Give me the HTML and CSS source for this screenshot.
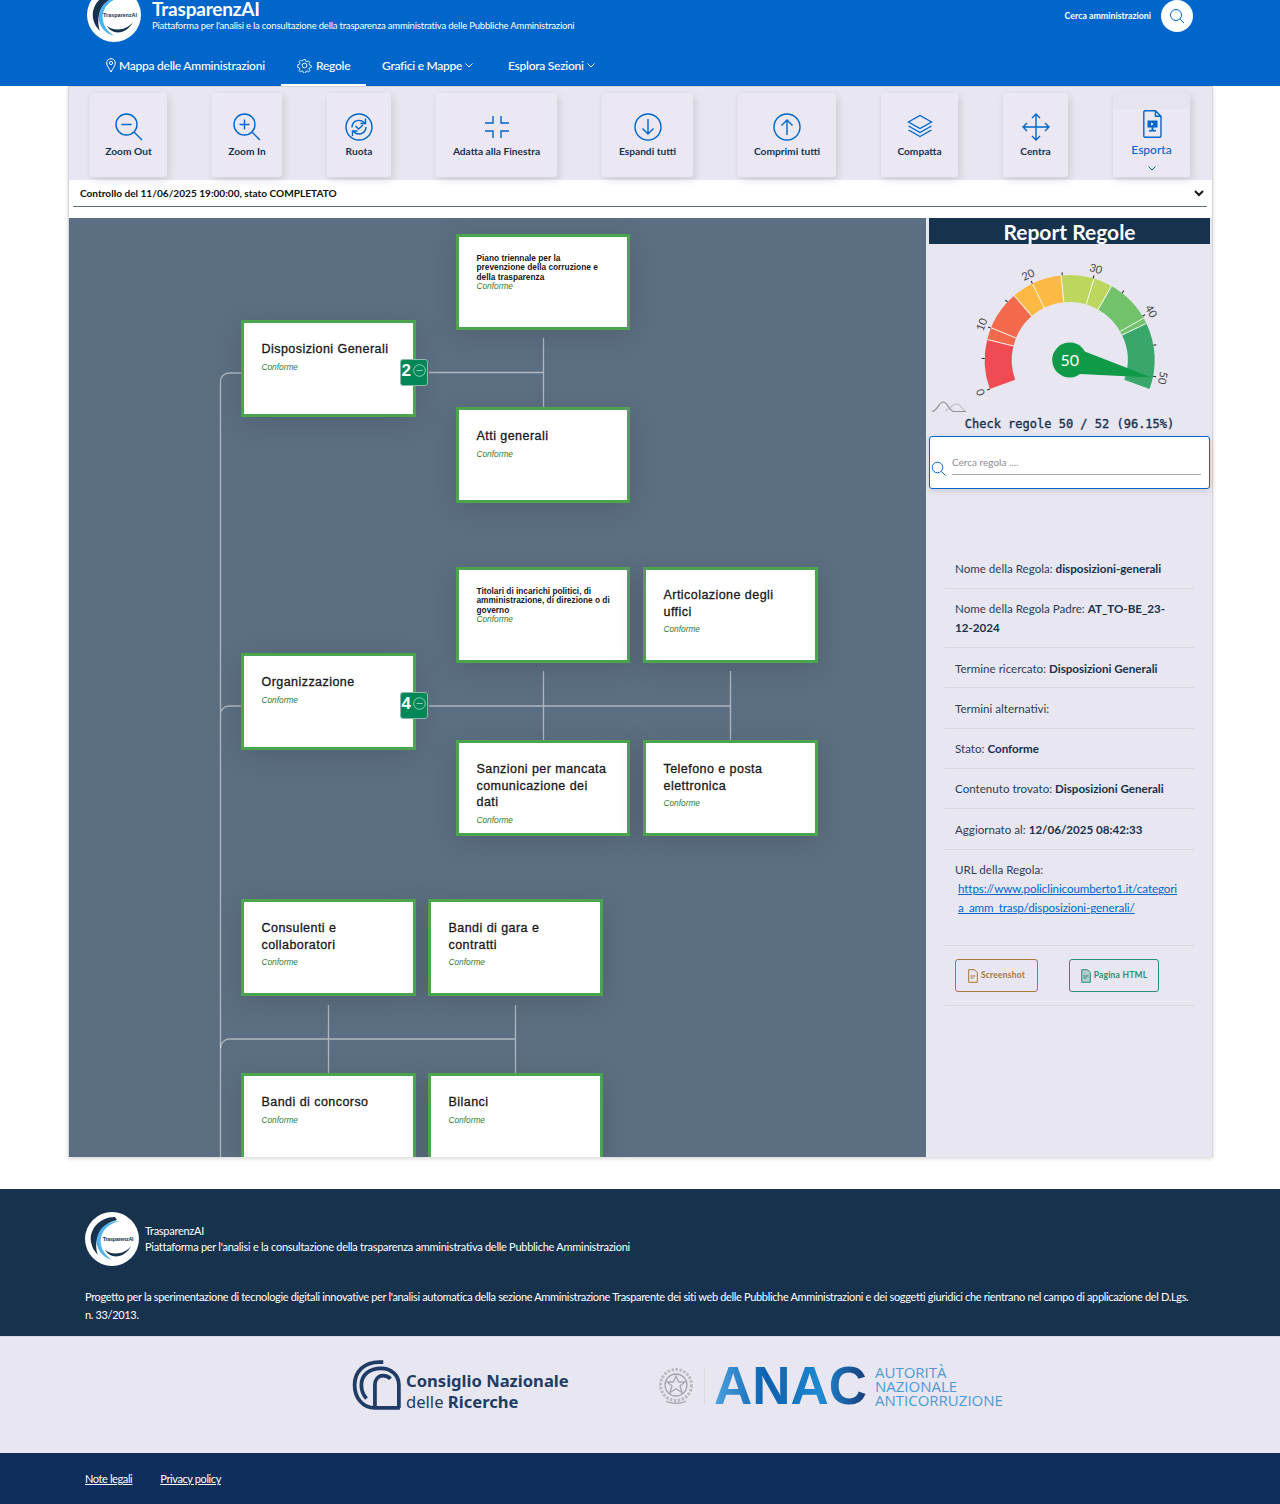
FILE: index.html
```html
<!DOCTYPE html>
<html lang="it">
<head>
    <meta charset="UTF-8">
    <title>TrasparenzAI - Regole</title>
    <link rel="stylesheet" href="styles.css">
</head>
<body>
    <svg class="defs">
        <symbol id="logo" viewBox="0 0 54 54">
            <circle cx="27" cy="27" r="27" fill="#fff"/>
            <path d="M30 5C14 5 4 18 6 30c1 6 4 10 7 13C8 30 14 12 32 8z" fill="#17324d"/>
            <path d="M36 9C20 8 10 20 12 33c2 8 8 13 15 15-9-6-14-16-10-26 3-7 11-12 19-13z" fill="#4db2ee"/>
            <path d="M20 38c8 6 20 4 26-4-6 12-20 14-26 4z" fill="#17324d"/>
            <text x="33" y="29" class="logo-text">TrasparenzAI</text>
        </symbol>
    </svg>

    <header class="site-header">
        <div class="header-top">
            <svg class="header-logo"><use href="#logo"/></svg>
            <div class="brand">
                <div class="brand-name">TrasparenzAI</div>
                <div class="brand-sub">Piattaforma per l'analisi e la consultazione della trasparenza amministrativa delle Pubbliche Amministrazioni</div>
            </div>
            <div class="header-search">
                <span class="search-label">Cerca amministrazioni</span>
                <span class="search-circle">
                    <svg width="16" height="16" viewBox="0 0 16 16" class="stroke-blue thin"><circle cx="7" cy="7" r="5.5"/><path d="M11 11l4 4"/></svg>
                </span>
            </div>
        </div>
        <nav class="main-nav">
            <a class="nav-item">
                <svg width="10" height="15" viewBox="0 0 10 15" class="stroke-white"><path d="M5 14C3 10 .7 8 .7 5a4.3 4.3 0 0 1 8.6 0C9.300 8 7 10 5 14z"/><circle cx="5" cy="5" r="1.600"/></svg>
                Mappa delle Amministrazioni
            </a>
            <a class="nav-item active">
                <svg width="15" height="15" viewBox="0 0 16 16" class="stroke-white"><circle cx="8" cy="8" r="2.500"/><path d="M6.800 1h2.400l.4 2 1.500.7 1.800-1.100 1.600 1.700-1.100 1.700.6 1.600 2 .4v2.200l-2 .5-.6 1.500 1.100 1.800-1.600 1.600-1.800-1.100-1.500.6-.4 2H6.800l-.4-2-1.500-.6-1.800 1.100-1.600-1.600 1.100-1.800-.6-1.500-2-.5V7l2-.4.600-1.600-1.100-1.700 1.600-1.700 1.800 1.100 1.500-.7z" transform="translate(.8 .8) scale(.9)"/></svg>
                Regole
            </a>
            <a class="nav-item">
                Grafici e Mappe
                <svg width="8" height="5" viewBox="0 0 8 5" class="stroke-white"><path d="M.5.500L4 4 7.500.500"/></svg>
            </a>
            <a class="nav-item">
                Esplora Sezioni
                <svg width="8" height="5" viewBox="0 0 8 5" class="stroke-white"><path d="M.5.500L4 4 7.500.500"/></svg>
            </a>
        </nav>
    </header>

    <main class="card">
        <div class="toolbar">
            <button class="tool-btn">
                <svg viewBox="0 0 28 28" class="stroke-blue"><circle cx="11.500" cy="11.500" r="10.500"/><path d="M19 19l8 8M6.500 11.500h10"/></svg>
                Zoom Out
            </button>
            <button class="tool-btn">
                <svg viewBox="0 0 28 28" class="stroke-blue"><circle cx="11.500" cy="11.500" r="10.500"/><path d="M19 19l8 8M6.500 11.500h10M11.500 6.500v10"/></svg>
                Zoom In
            </button>
            <button class="tool-btn">
                <svg viewBox="0 0 28 28" class="stroke-blue"><circle cx="14" cy="14" r="13"/><path d="M7 14.500C7 9 12 6 17 8l3 2M20.500 5.500v5h-5M21 14c0 5.500-5 8-10 6.500L8 18M7.500 23v-5h5M10.500 13l3 3 4.500-4"/></svg>
                Ruota
            </button>
            <button class="tool-btn">
                <svg viewBox="0 0 28 28" class="stroke-blue"><path d="M2 10h8V3M26 10h-8V3M2 18h8v7M26 18h-8v7"/></svg>
                Adatta alla Finestra
            </button>
            <button class="tool-btn">
                <svg viewBox="0 0 28 28" class="stroke-blue"><circle cx="14" cy="14" r="13"/><path d="M14 6v15M8.500 15.500L14 21l5.500-5.500"/></svg>
                Espandi tutti
            </button>
            <button class="tool-btn">
                <svg viewBox="0 0 28 28" class="stroke-blue"><circle cx="14" cy="14" r="13"/><path d="M14 22V7M8.500 12.500L14 7l5.500 5.500"/></svg>
                Comprimi tutti
            </button>
            <button class="tool-btn">
                <svg viewBox="0 0 28 28" class="stroke-blue"><path d="M14 2.500L25.500 9 14 15.500 2.500 9zM2.500 13L14 19.500 25.500 13M2.500 17L14 23.500 25.500 17"/></svg>
                Compatta
            </button>
            <button class="tool-btn">
                <svg viewBox="0 0 28 28" class="stroke-blue"><path d="M14 1v26M1 14h26M10 5l4-4 4 4M10 23l4 4 4-4M5 10l-4 4 4 4M23 10l4 4-4 4"/></svg>
                Centra
            </button>
            <button class="tool-btn export-btn">
                <svg viewBox="0 0 28 28" class="stroke-blue"><path d="M7 .8h10.500L23 6.300V26a1.200 1.200 0 0 1-1.200 1.200H7A1.200 1.200 0 0 1 5.800 26V2A1.200 1.200 0 0 1 7 .8zM17.500.8v5.500H23"/><path class="fill-blue" d="M9.500 10.500h10v7h-4v2.500h2.500v1.500h-7V20h2.500v-2.500h-4z"/><path d="M13 12.500l3 1.500-3 1.500z" class="fill-light"/></svg>
                Esporta
                <svg class="export-chevron stroke-blue thin" viewBox="0 0 8 5"><path d="M.5.500L4 4 7.500.500"/></svg>
            </button>
        </div>

        <div class="run-select">
            <span>Controllo del 11/06/2025 19:00:00, stato COMPLETATO</span>
            <svg width="10" height="7" viewBox="0 0 10 7"><path d="M1 1l4 4 4-4" fill="none" stroke="#17171a" stroke-width="2"/></svg>
        </div>

        <div class="workspace">
            <section class="chart">
                <svg class="links" width="857" height="939">
                    <path d="M172 155H160a8.500 8.500 0 0 0-8.500 8.500V939M172 488H160a8.500 8.500 0 0 0-8.500 8.500M360 154.500H474.500M474.500 120V189"/>
                    <path d="M360 488H661.500M474.500 453V522M661.500 453V522"/>
                    <path d="M151.500 830a9 9 0 0 1 9-9H446.500M259.500 787V855M446.500 787V855"/>
                </svg>

                <div class="node pos-piano"><div class="node-title small">Piano triennale per la prevenzione della corruzione e della trasparenza</div><div class="node-state tight">Conforme</div></div>
                <div class="node pos-disp"><div class="node-title">Disposizioni Generali</div><div class="node-state">Conforme</div>
                    <div class="node-badge">2<svg width="13" height="13" viewBox="0 0 13 13"><circle cx="6.500" cy="6.500" r="5.800"/><path d="M3.500 6.500h6"/></svg></div>
                </div>
                <div class="node pos-atti"><div class="node-title">Atti generali</div><div class="node-state">Conforme</div></div>
                <div class="node pos-titolari"><div class="node-title small">Titolari di incarichi politici, di amministrazione, di direzione o di governo</div><div class="node-state tight">Conforme</div></div>
                <div class="node pos-artic"><div class="node-title">Articolazione degli uffici</div><div class="node-state">Conforme</div></div>
                <div class="node pos-org"><div class="node-title">Organizzazione</div><div class="node-state">Conforme</div>
                    <div class="node-badge">4<svg width="13" height="13" viewBox="0 0 13 13"><circle cx="6.500" cy="6.500" r="5.800"/><path d="M3.500 6.500h6"/></svg></div>
                </div>
                <div class="node pos-sanz"><div class="node-title">Sanzioni per mancata comunicazione dei dati</div><div class="node-state">Conforme</div></div>
                <div class="node pos-tel"><div class="node-title">Telefono e posta elettronica</div><div class="node-state">Conforme</div></div>
                <div class="node pos-cons"><div class="node-title">Consulenti e collaboratori</div><div class="node-state">Conforme</div></div>
                <div class="node pos-gara"><div class="node-title">Bandi di gara e contratti</div><div class="node-state">Conforme</div></div>
                <div class="node pos-conc"><div class="node-title">Bandi di concorso</div><div class="node-state">Conforme</div></div>
                <div class="node pos-bil"><div class="node-title">Bilanci</div><div class="node-state">Conforme</div></div>
            </section>

            <aside class="report">
                <h2 class="report-title">Report Regole</h2>
                <svg class="gauge" width="281" height="170" viewBox="0 0 281 170">
                    <g transform="translate(140.7 116)">
                        <g class="gauge-arc">
                            <circle r="71.500" pathLength="360" stroke-dasharray="34 326" stroke="#ee4c52" transform="rotate(-200)"/>
                            <circle r="71.500" pathLength="360" stroke-dasharray="35.200 324.800" stroke="#f26a4b" transform="rotate(-166)"/>
                            <circle r="71.500" pathLength="360" stroke-dasharray="35 325" stroke="#fdb946" transform="rotate(-130.800)"/>
                            <circle r="71.500" pathLength="360" stroke-dasharray="35.200 324.800" stroke="#bdd75e" transform="rotate(-95.800)"/>
                            <circle r="71.500" pathLength="360" stroke-dasharray="35.100 324.900" stroke="#72c26c" transform="rotate(-60.600)"/>
                            <circle r="71.500" pathLength="360" stroke-dasharray="45.500 314.500" stroke="#3aa76a" transform="rotate(-25.500)"/>
                        </g>
                        <g class="gauge-seps">
                            <path d="M0-58V-85" transform="rotate(-76)"/>
                            <path d="M0-58V-85" transform="rotate(-67.700)"/>
                            <path d="M0-58V-85" transform="rotate(-40.800)"/>
                            <path d="M0-58V-85" transform="rotate(-26)"/>
                            <path d="M0-58V-85" transform="rotate(-5.800)"/>
                            <path d="M0-58V-85" transform="rotate(16.600)"/>
                            <path d="M0-58V-85" transform="rotate(29.400)"/>
                            <path d="M0-58V-85" transform="rotate(60.500)"/>
                            <path d="M0-58V-85" transform="rotate(64.500)"/>
                        </g>
                        <g class="gauge-ticks">
                            <path d="M0-85V-88" transform="rotate(-110)"/>
                            <path d="M0-85V-88" transform="rotate(-89)"/>
                            <path d="M0-85V-88" transform="rotate(-68)"/>
                            <path d="M0-85V-88" transform="rotate(-47)"/>
                            <path d="M0-85V-88" transform="rotate(-26)"/>
                            <path d="M0-85V-88" transform="rotate(-5)"/>
                            <path d="M0-85V-88" transform="rotate(16)"/>
                            <path d="M0-85V-88" transform="rotate(38)"/>
                            <path d="M0-85V-88" transform="rotate(59)"/>
                            <path d="M0-85V-88" transform="rotate(80)"/>
                            <path d="M0-85V-88" transform="rotate(101)"/>
                        </g>
                        <g class="gauge-labels">
                            <text transform="rotate(-110) translate(0 -91)">0</text>
                            <text transform="rotate(-68) translate(0 -91)">10</text>
                            <text transform="rotate(-26) translate(0 -91)">20</text>
                            <text transform="rotate(16) translate(0 -91)">30</text>
                            <text transform="rotate(59) translate(0 -91)">40</text>
                            <text transform="rotate(101) translate(0 -91)">50</text>
                        </g>
                        <path class="gauge-needle" d="M15-8.500L82 17.500 10 14z"/>
                        <circle r="17.500" class="gauge-hub"/>
                        <text class="gauge-value" y="5.500">50</text>
                    </g>
                    <path class="spark light" d="M16 167c5-1 6-7 12-7 4 0 5 6 8 7"/>
                    <path class="spark" d="M3 167.500c5 0 7-9.500 11-9.500 5 0 6 9.500 11 9.500h12"/>
                </svg>
                <div class="check-line">Check regole 50 / 52 (96.15%)</div>
                <div class="rule-search">
                    <svg width="15" height="15" viewBox="0 0 15 15" class="stroke-blue thin"><circle cx="6.500" cy="6.500" r="5.300"/><path d="M10.500 10.500l4 4"/></svg>
                    <div class="rule-input">Cerca regola ....</div>
                </div>

                <ul class="rule-details">
                    <li>Nome della Regola: <strong>disposizioni-generali</strong></li>
                    <li>Nome della Regola Padre: <strong>AT_TO-BE_23-<br>12-2024</strong></li>
                    <li>Termine ricercato: <strong>Disposizioni Generali</strong></li>
                    <li>Termini alternativi:</li>
                    <li>Stato: <strong>Conforme</strong></li>
                    <li>Contenuto trovato: <strong>Disposizioni Generali</strong></li>
                    <li>Aggiornato al: <strong>12/06/2025 08:42:33</strong></li>
                    <li class="url-item">URL della Regola:<br><a class="rule-link">https://www.policlinicoumberto1.it/categoria_amm_trasp/disposizioni-generali/</a></li>
                    <li class="button-row">
                        <a class="outline-btn brown">
                            <svg width="10" height="14" viewBox="0 0 10 14"><path d="M.7.700h5.800l2.800 2.800v9.800H.7zM2.500 7h5M2.500 9h3"/></svg>
                            Screenshot
                        </a>
                        <a class="outline-btn teal">
                            <svg width="10" height="14" viewBox="0 0 10 14"><path d="M.7.700h5.800l2.800 2.800v9.800H.7zM2.500 7h5M2.500 9h3"/></svg>
                            Pagina HTML
                        </a>
                    </li>
                </ul>
            </aside>
        </div>
    </main>

    <footer class="site-footer">
        <div class="footer-top">
            <div class="footer-brand">
                <svg class="footer-logo"><use href="#logo"/></svg>
                <div>
                    <div>TrasparenzAI</div>
                    <div>Piattaforma per l'analisi e la consultazione della trasparenza amministrativa delle Pubbliche Amministrazioni</div>
                </div>
            </div>
            <p class="footer-note">Progetto per la sperimentazione di tecnologie digitali innovative per l'analisi automatica della sezione Amministrazione Trasparente dei siti web delle Pubbliche Amministrazioni e dei soggetti giuridici che rientrano nel campo di applicazione del D.Lgs. n. 33/2013.</p>
        </div>
        <div class="partners">
            <div class="cnr">
                <svg width="50" height="50" viewBox="0 0 48 48" class="cnr-mark"><path d="M46 46H22C10 46 2.500 36 2.500 24 2.500 11 12 2 26 2h4"/><path d="M14 37c-3-3-5-8-5-13C9 14 17 8 28 8c10 0 17 7 17 16v22"/><path d="M22 46V24c0-5 3-9 8-9 3 0 5 1 7 3"/></svg>
                <div class="cnr-text"><b>Consiglio Nazionale</b><span>delle <b>Ricerche</b></span></div>
            </div>
            <div class="anac">
                <svg width="36" height="40" viewBox="0 0 36 40" class="emblem"><circle cx="18" cy="19" r="15.500" class="wreath"/><circle cx="18" cy="19" r="11"/><path d="M18 10l2.700 6h6.300l-5 4 2 6.500-6-3.800-6 3.800 2-6.500-5-4h6.300z"/><path d="M8 35c4 3 16 3 20 0"/></svg>
                <div class="anac-divider"></div>
                <svg width="152" height="42" viewBox="0 0 152 42" class="anac-mark">
                    <defs><linearGradient id="anacFill" x1="0" x2="1" y1="0" y2="0"><stop offset="0" stop-color="#4aa3e0"/><stop offset=".35" stop-color="#0b5fad"/><stop offset=".7" stop-color="#1f8ad2"/><stop offset="1" stop-color="#173a78"/></linearGradient></defs>
                    <text x="-2" y="39" textLength="153" lengthAdjust="spacingAndGlyphs" fill="url(#anacFill)">ANAC</text>
                </svg>
                <div class="anac-text">AUTORITÀ<br>NAZIONALE<br>ANTICORRUZIONE</div>
            </div>
        </div>
        <div class="footer-links">
            <a>Note legali</a>
            <a>Privacy policy</a>
        </div>
    </footer>
</body>
</html>
```

FILE: styles.css
```css
* {
    margin: 0;
    padding: 0;
    box-sizing: border-box;
}

body {
    font-family: 'Lato', 'Roboto', sans-serif;
    background: white;
    color: #17324d;
    width: 1280px;
    height: 1504px;
    overflow: hidden;
}

.defs {
    position: absolute;
    width: 0;
    height: 0;
}

.logo-text {
    font-family: 'Liberation Sans', sans-serif;
    font-size: 5.4px;
    font-weight: bold;
    fill: #17324d;
    text-anchor: middle;
}

.stroke-blue { fill: none; stroke: #0066cc; stroke-width: 1.4; }
.stroke-blue.thin { stroke-width: 1; }
.stroke-white { fill: none; stroke: white; stroke-width: 1; flex-shrink: 0; }
.fill-blue { fill: #0066cc; stroke: none; }
.fill-light { fill: #e8e6f0; stroke: none; }

/* header */
.site-header {
    background: #0066cc;
    height: 86px;
    color: white;
    overflow: hidden;
}

.header-top {
    display: flex;
    align-items: flex-start;
    margin-top: -12px;
    padding: 0 87px;
    height: 54px;
}

.header-logo {
    width: 54px;
    height: 54px;
    flex-shrink: 0;
}

.brand {
    margin-left: 11px;
    padding-top: 12px;
}

.brand-name {
    font-size: 19px;
    font-weight: 700;
    line-height: 18px;
    letter-spacing: -0.2px;
}

.brand-sub {
    font-size: 9.5px;
    line-height: 13px;
    margin-top: 1px;
    letter-spacing: -0.2px;
}

.header-search {
    margin-left: auto;
    display: flex;
    align-items: center;
    gap: 10px;
    margin-top: 12px;
    font-size: 8.8px;
    font-weight: 700;
}

.search-label {
    padding-bottom: 1px;
}

.search-circle {
    width: 32px;
    height: 32px;
    border-radius: 50%;
    background: white;
    display: flex;
    align-items: center;
    justify-content: center;
}

.main-nav {
    display: grid;
    grid-template-columns: 191px 85px 126px auto;
    margin-left: 90px;
    height: 44px;
}

.nav-item {
    display: flex;
    align-items: center;
    gap: 3px;
    padding: 2px 16px 0;
    font-size: 12px;
    font-weight: 500;
    letter-spacing: -0.25px;
    white-space: nowrap;
}

.nav-item.active {
    border-bottom: 2px solid white;
    padding-top: 4px;
    gap: 4px;
}

/* main card */
.card {
    margin: 0 67px 0 68px;
    height: 1071px;
    background: white;
    border: 1px solid #d4d4da;
    border-top: 0;
    box-shadow: 0 2px 4px rgba(0,0,0,0.15);
}

.toolbar {
    background: #e8e6f0;
    height: 94px;
    padding: 6px 0 0 21px;
    display: grid;
    grid-template-columns: 77px 70px 64px 121px 91px 98px 77px 65px 77px;
    gap: 45px;
    border-top: 1px solid #d4d4da;
}

.tool-btn {
    height: 84px;
    border: none;
    border-radius: 3px;
    background: #ebe8f3;
    box-shadow: 2px 3px 8px rgba(0,0,0,0.12);
    font-family: inherit;
    font-size: 10.2px;
    font-weight: 700;
    color: #17324d;
    display: flex;
    flex-direction: column;
    align-items: center;
    padding-top: 20px;
    gap: 4px;
    white-space: nowrap;
}

.tool-btn svg {
    width: 28px;
    height: 28px;
    flex-shrink: 0;
}

.export-btn {
    color: #0066cc;
    font-size: 12px;
    font-weight: 500;
    padding-top: 17px;
    background: linear-gradient(#e6e4ee 16px, #ebe8f3 16px);
}

.tool-btn .export-chevron {
    width: 8px;
    height: 5px;
    margin-top: 5px;
}

.run-select {
    margin: 0 5px 0 4px;
    height: 27px;
    padding: 0 3px 0 7px;
    display: flex;
    align-items: center;
    justify-content: space-between;
    border-bottom: 1px solid #5c6f82;
    font-size: 10.1px;
    font-weight: 700;
    color: #111;
}

.workspace {
    display: flex;
    margin-top: 11px;
    height: 939px;
}

/* org chart */
.chart {
    position: relative;
    width: 857px;
    background: #5c6f82;
    overflow: hidden;
    flex-shrink: 0;
}

.links {
    position: absolute;
    left: 0;
    top: 0;
    fill: none;
    stroke: rgba(255,255,255,0.5);
    stroke-width: 1.3;
}

.node {
    position: absolute;
    width: 174px;
    height: 96px;
    background: white;
    border: 3px solid #4ba54f;
    padding: 18px 20px 0 17.500px;
    box-shadow: 0 6px 28px rgba(0,0,0,0.14);
    font-family: 'Liberation Sans', sans-serif;
}

.node-title {
    font-size: 12.5px;
    line-height: 16.5px;
    font-weight: 400;
    letter-spacing: 0.45px;
    color: #17171a;
    -webkit-text-stroke: 0.3px #17171a;
}

.node-title.small {
    font-size: 8.3px;
    line-height: 9.4px;
    font-weight: bold;
    letter-spacing: 0;
    -webkit-text-stroke: 0;
}

.pos-piano .node-title.small {
    margin-right: 4px;
}

.pos-titolari .node-title.small {
    margin-right: -10px;
}

.node-state {
    font-size: 8.3px;
    font-style: italic;
    color: #2e7d32;
    margin-top: 4px;
}

.node-state.tight {
    margin-top: 0;
    line-height: 9px;
}

.node-badge {
    position: absolute;
    right: -15px;
    top: 36px;
    width: 28px;
    height: 27px;
    background: #008758;
    border: 1px solid #8fb8ad;
    border-radius: 3px;
    color: white;
    font-size: 17px;
    line-height: 21px;
    font-weight: bold;
    letter-spacing: 0;
    display: flex;
    align-items: flex-start;
    gap: 2px;
    padding-left: 0.5px;
}

.node-badge svg {
    fill: none;
    stroke: rgba(255,255,255,0.7);
    stroke-width: 0.8;
    margin-top: 4px;
    flex-shrink: 0;
}

.pos-piano { left: 387px; top: 16px; padding-top: 17px; }
.pos-disp { left: 172px; top: 102px; height: 97px; width: 175px; }
.pos-atti { left: 387px; top: 189px; }
.pos-titolari { left: 387px; top: 349px; padding-top: 17px; }
.pos-artic { left: 574px; top: 349px; width: 175px; padding-top: 17px; }
.pos-org { left: 172px; top: 435px; height: 97px; width: 175px; }
.pos-sanz { left: 387px; top: 522px; }
.pos-tel { left: 574px; top: 522px; width: 175px; }
.pos-cons { left: 172px; top: 681px; height: 97px; width: 175px; }
.pos-gara { left: 359px; top: 681px; height: 97px; width: 175px; }
.pos-conc { left: 172px; top: 855px; height: 97px; width: 175px; }
.pos-bil { left: 359px; top: 855px; height: 97px; width: 175px; }

/* report panel */
.report {
    flex: 1;
    background: #e8e6f0;
    padding: 0 2px 0 3px;
}

.report-title {
    background: #17324d;
    color: white;
    height: 26px;
    line-height: 27px;
    font-size: 21px;
    font-weight: 700;
    text-align: center;
}

.gauge {
    display: block;
}

.gauge-arc circle {
    fill: none;
    stroke-width: 27;
}

.gauge-seps path {
    stroke: rgba(255,255,255,0.85);
    stroke-width: 1;
}

.gauge-ticks path {
    stroke: #222;
    stroke-width: 1;
}

.gauge-labels text {
    font-family: 'Lato', sans-serif;
    font-size: 11px;
    fill: #444;
    text-anchor: middle;
}

.gauge-needle, .gauge-hub {
    fill: #0e9a47;
}

.gauge-value {
    font-family: 'Lato', sans-serif;
    font-size: 16px;
    fill: white;
    text-anchor: middle;
}

.spark {
    fill: none;
    stroke: #8f8f94;
    stroke-width: 1.2;
}

.spark.light {
    stroke: #bcbcc2;
}

.check-line {
    font-family: 'DejaVu Sans Mono', monospace;
    font-size: 12px;
    font-weight: 500;
    line-height: 20px;
    margin-bottom: 2px;
    text-align: center;
    color: #17324d;
    -webkit-text-stroke: 0.35px #17324d;
}

.rule-search {
    height: 53px;
    background: white;
    border: 1px solid #0066cc;
    border-radius: 3px;
    box-shadow: 0 2px 6px rgba(0,0,0,0.12);
    padding: 0 8px 13px 1px;
    display: flex;
    align-items: flex-end;
    gap: 6px;
}

.rule-search svg {
    margin-bottom: -1px;
    flex-shrink: 0;
}

.rule-input {
    flex: 1;
    height: 24px;
    border-bottom: 1px solid #a9a9ad;
    font-size: 10px;
    line-height: 23px;
    color: #8c8c92;
}

.rule-details {
    list-style: none;
    margin: 59.500px 16px 0 16px;
    font-size: 11.6px;
    line-height: 19px;
    color: #2b3f54;
}

.rule-details li {
    padding: 10.500px 10px 9.800px;
    border-bottom: 1px solid #d8d7de;
}

.rule-details strong {
    font-weight: 700;
    color: #17324d;
}

.url-item {
    min-height: 96.500px;
}

.rule-link {
    display: block;
    width: 225px;
    padding-left: 3px;
    color: #0066cc;
    text-decoration: underline;
    letter-spacing: -0.1px;
    word-break: break-all;
}

.rule-details .button-row {
    display: flex;
    gap: 31px;
    padding: 13px 10px 13px;
}

.outline-btn {
    height: 33px;
    display: flex;
    align-items: center;
    justify-content: center;
    gap: 3px;
    border-radius: 3px;
    font-size: 8.5px;
    font-weight: 700;
    letter-spacing: 0.2px;
    border: 1.5px solid;
}

.outline-btn svg {
    fill: none;
    stroke: currentColor;
    stroke-width: 1;
    flex-shrink: 0;
}

.outline-btn.brown { width: 83px; color: #a8773b; }
.outline-btn.teal { width: 90px; color: #2a8f77; }
.outline-btn.teal svg { fill: rgba(42,143,119,0.3); }

/* footer */
.site-footer {
    margin-top: 32px;
}

.footer-top {
    background: #17324d;
    height: 147px;
    padding: 23px 85px 0;
    color: white;
    font-size: 11px;
    line-height: 16px;
    letter-spacing: -0.27px;
}

.footer-brand {
    display: flex;
    align-items: center;
    gap: 6px;
}

.footer-logo {
    width: 54px;
    height: 54px;
    flex-shrink: 0;
}

.footer-note {
    margin-top: 22px;
    line-height: 18px;
    letter-spacing: -0.34px;
}

.partners {
    background: #e8e6f0;
    height: 117px;
    display: flex;
    align-items: flex-start;
    padding: 21px 0 0 352px;
    border-top: 1px solid #dcdbe3;
}

.cnr {
    display: flex;
    align-items: center;
    gap: 4px;
    width: 306px;
}

.cnr-mark {
    fill: none;
    stroke: #1f3c66;
    stroke-width: 3.6;
    flex-shrink: 0;
}

.cnr-text {
    display: flex;
    flex-direction: column;
    padding-top: 11.500px;
    font-family: 'Noto Sans', sans-serif;
    font-size: 16.6px;
    line-height: 21px;
    color: #1f3c66;
}

.anac {
    display: flex;
    align-items: center;
    margin-top: 6.500px;
}

.emblem {
    fill: none;
    stroke: #a5a6ab;
    stroke-width: 1.3;
}

.emblem .wreath {
    stroke-width: 3;
    stroke-dasharray: 2.5 1.5;
    stroke: #b9babf;
}

.anac-divider {
    width: 1px;
    height: 38px;
    background: #d9d8df;
    margin: 0 11px 0 10px;
}

.anac-mark {
    overflow: visible;
    flex-shrink: 0;
}

.anac-mark text {
    font-family: 'Liberation Sans', sans-serif;
    font-size: 53px;
    font-weight: bold;
}

.anac-text {
    margin-left: 7px;
    font-family: 'Open Sans', sans-serif;
    font-size: 15px;
    line-height: 14px;
    white-space: nowrap;
    color: #4d9bd5;
}

.footer-links {
    background: #0f2f5a;
    height: 51px;
    padding: 0 85px;
    display: flex;
    align-items: center;
    gap: 28px;
    font-size: 11px;
    letter-spacing: -0.4px;
    color: white;
}

.footer-links a {
    text-decoration: underline;
}
```
